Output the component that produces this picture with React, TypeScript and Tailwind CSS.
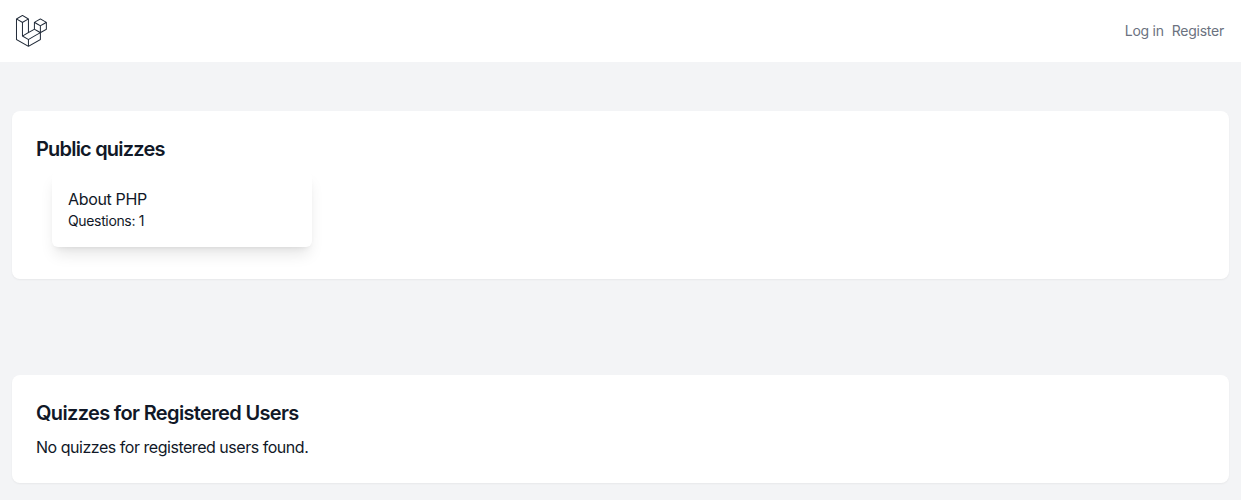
const logo = "M305.8 81.125C305.77 80.995 305.69 80.885 305.65 80.755C305.56 80.525 305.49 80.285 305.37 80.075C305.29 79.935 305.17 79.815 305.07 79.685C304.94 79.515 304.83 79.325 304.68 79.175C304.55 79.045 304.39 78.955 304.25 78.845C304.09 78.715 303.95 78.575 303.77 78.475L251.32 48.275C249.97 47.495 248.31 47.495 246.96 48.275L194.51 78.475C194.33 78.575 194.19 78.725 194.03 78.845C193.89 78.955 193.73 79.045 193.6 79.175C193.45 79.325 193.34 79.515 193.21 79.685C193.11 79.815 192.99 79.935 192.91 80.075C192.79 80.285 192.71 80.525 192.63 80.755C192.58 80.875 192.51 80.995 192.48 81.125C192.38 81.495 192.33 81.875 192.33 82.265V139.625L148.62 164.795V52.575C148.62 52.185 148.57 51.805 148.47 51.435C148.44 51.305 148.36 51.195 148.32 51.065C148.23 50.835 148.16 50.595 148.04 50.385C147.96 50.245 147.84 50.125 147.74 49.995C147.61 49.825 147.5 49.635 147.35 49.485C147.22 49.355 147.06 49.265 146.92 49.155C146.76 49.025 146.62 48.885 146.44 48.785L93.99 18.585C92.64 17.805 90.98 17.805 89.63 18.585L37.18 48.785C37 48.885 36.86 49.035 36.7 49.155C36.56 49.265 36.4 49.355 36.27 49.485C36.12 49.635 36.01 49.825 35.88 49.995C35.78 50.125 35.66 50.245 35.58 50.385C35.46 50.595 35.38 50.835 35.3 51.065C35.25 51.185 35.18 51.305 35.15 51.435C35.05 51.805 35 52.185 35 52.575V232.235C35 233.795 35.84 235.245 37.19 236.025L142.1 296.425C142.33 296.555 142.58 296.635 142.83 296.725C142.95 296.765 143.06 296.835 143.18 296.865C143.55 296.965 143.93 297.015 144.31 297.015C144.69 297.015 145.07 296.965 145.44 296.865C145.56 296.835 145.67 296.765 145.79 296.725C146.04 296.635 146.29 296.555 146.52 296.425L251.43 236.025C252.78 235.245 253.62 233.795 253.62 232.235V174.885L303.79 146.005C305.14 145.225 305.98 143.775 305.98 142.215V82.265C305.98 81.875 305.93 81.495 305.83 81.125H305.8ZM144.2 227.205L100.57 202.515L146.39 176.135L196.66 147.195L240.33 172.335L208.29 190.625L144.2 227.205ZM244.75 114.995V164.795L226.39 154.225L201.03 139.625V89.825L219.39 100.395L244.75 114.995ZM249.12 57.105L292.81 82.265L249.12 107.425L205.43 82.265L249.12 57.105ZM114.49 184.425L96.13 194.995V85.305L121.49 70.705L139.85 60.135V169.815L114.49 184.425ZM91.76 27.425L135.45 52.585L91.76 77.745L48.07 52.585L91.76 27.425ZM43.67 60.135L62.03 70.705L87.39 85.305V202.545V202.555V202.565C87.39 202.735 87.44 202.895 87.46 203.055C87.49 203.265 87.49 203.485 87.55 203.695V203.705C87.6 203.875 87.69 204.035 87.76 204.195C87.84 204.375 87.89 204.575 87.99 204.745C87.99 204.745 87.99 204.755 88 204.755C88.09 204.905 88.22 205.035 88.33 205.175C88.45 205.335 88.55 205.495 88.69 205.635L88.7 205.645C88.82 205.765 88.98 205.855 89.12 205.965C89.28 206.085 89.42 206.225 89.59 206.325C89.6 206.325 89.6 206.325 89.61 206.335C89.62 206.335 89.62 206.345 89.63 206.345L139.87 234.775V285.065L43.67 229.705V60.135ZM244.75 229.705L148.58 285.075V234.775L219.8 194.115L244.75 179.875V229.705ZM297.2 139.625L253.49 164.795V114.995L278.85 100.395L297.21 89.825V139.625H297.2Z";

export default function App() {
  return (
    <div className="min-h-screen bg-[#f3f4f6] font-['Inter',sans-serif] text-[#111827]">
      <nav className="h-[62px] bg-white flex items-center justify-between px-3">
        <svg viewBox="0 0 316 316" className="w-9 h-9 fill-[#1f2937]">
          <path d={logo} />
        </svg>
        <div className="flex gap-2 pr-[5px] text-sm tracking-[-0.25px] text-[#6b7280]">
          <span>Log in</span>
          <span>Register</span>
        </div>
      </nav>
      <div className="px-3 pt-[49px]">
        <section className="bg-white rounded-lg shadow-xs p-6">
          <h2 className="text-xl font-semibold tracking-[-0.8px]">Public quizzes</h2>
          <div className="my-2 ml-4 w-[260px] rounded-md bg-white shadow-lg p-4">
            <div className="text-base tracking-[-0.35px]">About PHP</div>
            <div className="text-sm tracking-[-0.35px]">Questions: 1</div>
          </div>
        </section>
        <section className="mt-24 bg-white rounded-lg shadow-xs p-6">
          <h2 className="text-xl font-semibold tracking-[-0.65px]">Quizzes for Registered Users</h2>
          <p className="mt-2 text-base tracking-[-0.47px]">No quizzes for registered users found.</p>
        </section>
      </div>
    </div>
  );
}
